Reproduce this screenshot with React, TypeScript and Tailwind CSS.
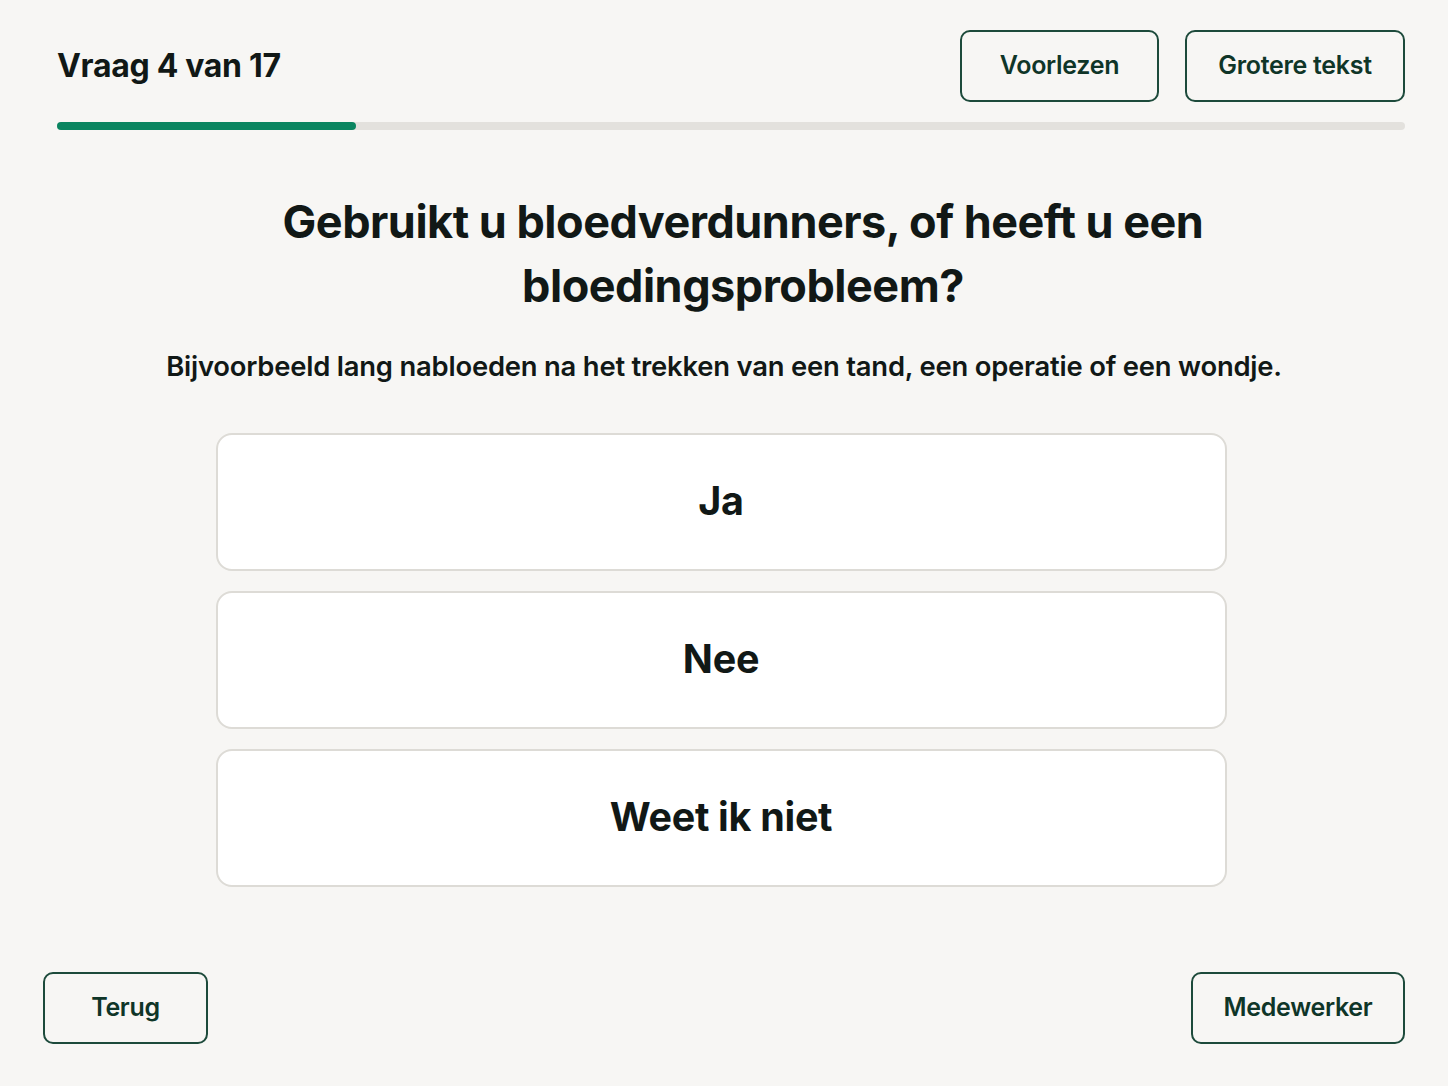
import React from "react";

const font = { fontFamily: "Inter, 'Noto Sans', 'Liberation Sans', sans-serif" };

function OutlineButton({ children, className = "" }: { children: React.ReactNode; className?: string }) {
  return (
    <button
      className={`h-[72px] rounded-[10px] border-2 border-[#1d4a3b] bg-transparent text-[25px] font-semibold text-[#0f3528] tracking-[-0.3px] ${className}`}
    >
      {children}
    </button>
  );
}

function Option({ label }: { label: string }) {
  return (
    <button className="h-[138px] w-full rounded-[16px] border-2 border-[#dddbd6] bg-white text-[39.5px] font-bold text-[#111816] tracking-[-0.3px]">
      {label}
    </button>
  );
}

export default function App() {
  return (
    <div style={font} className="flex min-h-[1086px] w-full flex-col bg-[#f7f6f4] text-[#111816]">
      <header className="pl-[57px] pr-[43px] pt-[30px]">
        <div className="flex items-center justify-between">
          <h2 className="text-[32px] font-bold tracking-[-0.3px]">Vraag 4 van 17</h2>
          <div className="flex gap-[26px]">
            <OutlineButton className="w-[199px]">Voorlezen</OutlineButton>
            <OutlineButton className="w-[220px]">Grotere tekst</OutlineButton>
          </div>
        </div>
        <div className="mt-[20px] h-[8px] w-full rounded-full bg-[#e3e1dd]">
          <div className="h-full w-[22.2%] rounded-full bg-[#0a8560]" />
        </div>
      </header>

      <main className="flex flex-col items-center pt-[60px]">
        <h1 className="w-[1000px] pl-[38px] text-center text-[45px] font-bold leading-[64px] tracking-[-0.5px]">
          Gebruikt u bloedverdunners, of heeft u een bloedingsprobleem?
        </h1>
        <p className="mt-[30px] text-center text-[27.4px] font-semibold leading-[36px] tracking-[-0.2px]">
          Bijvoorbeeld lang nabloeden na het trekken van een tand, een operatie of een wondje.
        </p>
        <div className="mt-[49px] flex w-[1011px] -translate-x-[3px] flex-col gap-[20px]">
          <Option label="Ja" />
          <Option label="Nee" />
          <Option label="Weet ik niet" />
        </div>
      </main>

      <footer className="mt-auto flex items-center justify-between px-[43px] pb-[42px] pt-[84px]">
        <OutlineButton className="w-[165px]">Terug</OutlineButton>
        <OutlineButton className="w-[214px]">Medewerker</OutlineButton>
      </footer>
    </div>
  );
}
